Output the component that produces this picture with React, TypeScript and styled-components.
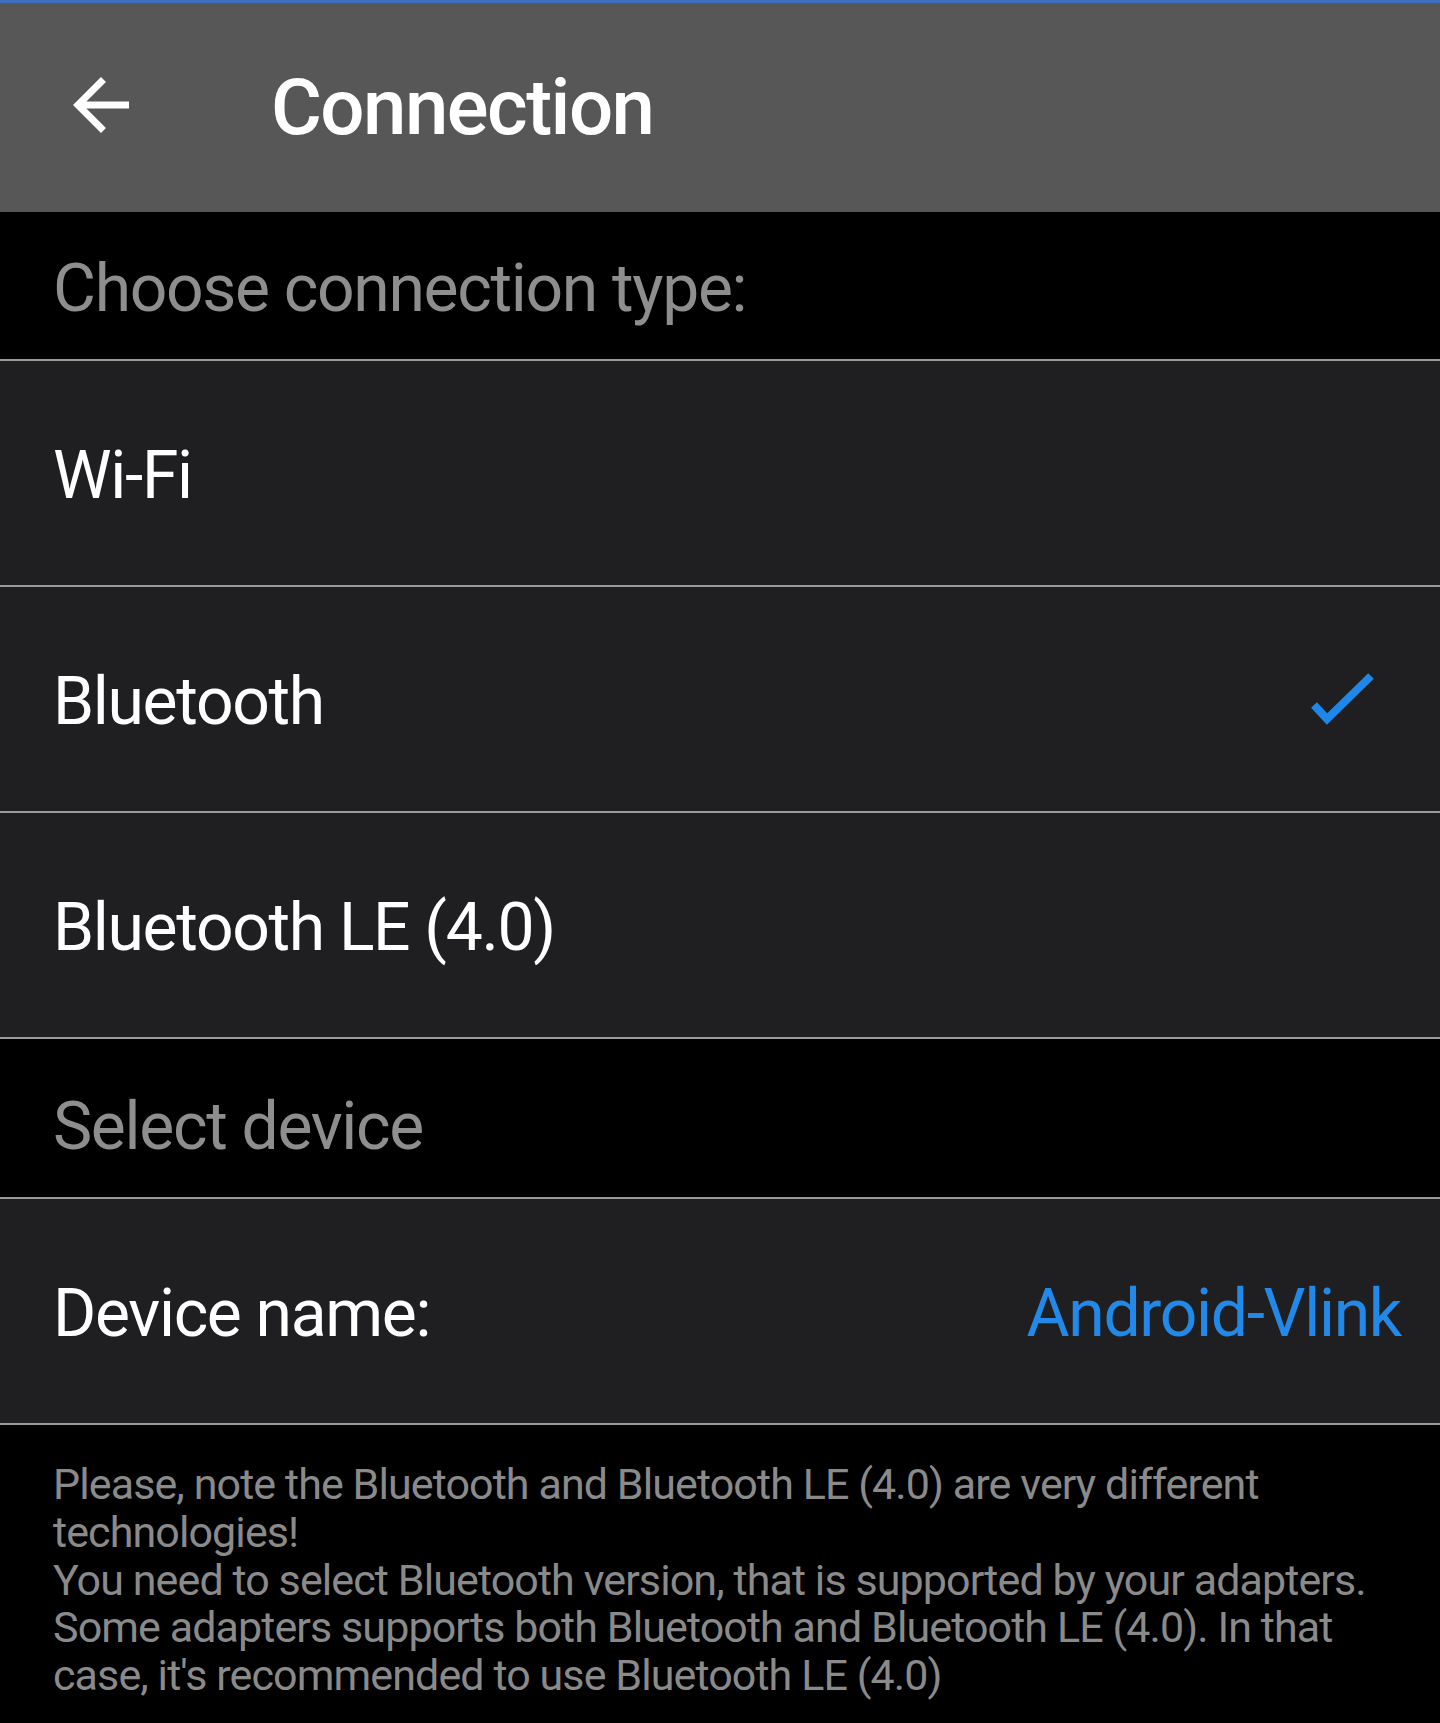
import styled, {createGlobalStyle} from "styled-components";

const GlobalStyle = createGlobalStyle`
  body {
    margin: 0;
    background: #000;
    font-family: Roboto, "Liberation Sans", Arial, sans-serif;
  }
`

const Page = styled.div`
  width: 1440px;
  min-height: 1723px;
  background: #000;
`

const TopBar = styled.header`
  height: 209px;
  border-top: 3px solid #3d6fc2;
  background: #575757;
  display: flex;
  align-items: center;
  padding-left: 59px;
`

const BackButton = styled.button`
  width: 84px;
  height: 84px;
  padding: 0;
  border: none;
  background: transparent;
  display: flex;
  align-items: center;
  justify-content: center;
  margin-top: -5px;
`

const Title = styled.h1`
  margin: 0 0 0 128px;
  color: #fff;
  font-size: 78px;
  font-weight: 500;
  letter-spacing: -0.02em;
`

const Section = styled.div<{ $height: number; $offset: number; $divider?: boolean }>`
  height: ${p => p.$height}px;
  border-top: ${p => (p.$divider ? "2px solid #9a9a9a" : "none")};
  background: #000;
  display: flex;
  align-items: center;
  padding: ${p => p.$offset}px 53px 0;
  box-sizing: border-box;
  color: #8e8e8e;
  font-size: 66px;
  letter-spacing: -0.02em;
`

const Row = styled.div`
  height: 226px;
  box-sizing: border-box;
  border-top: 2px solid #9a9a9a;
  background: #1f1f21;
  display: flex;
  align-items: center;
  justify-content: space-between;
  padding: 5px 39px 0 53px;
  color: #fff;
  font-size: 66px;
  letter-spacing: -0.02em;
`

const Value = styled.span`
  color: #2389e8;
`

const Check = styled.svg`
  width: 70px;
  height: 60px;
  margin-right: 22px;
`

const Note = styled.p`
  margin: 0;
  border-top: 2px solid #9a9a9a;
  padding: 36px 40px 40px 53px;
  color: #8a8a8a;
  font-size: 43px;
  line-height: 47.8px;
  letter-spacing: -0.021em;
  white-space: pre-line;
`

const options = ["Wi-Fi", "Bluetooth", "Bluetooth LE (4.0)"]

export default function App() {
    const selected = "Bluetooth"
    return (
        <>
            <GlobalStyle/>
            <Page>
                <TopBar>
                    <BackButton aria-label="Back">
                        <svg width="84" height="84" viewBox="0 0 24 24" fill="#fff">
                            <path d="M20 11H7.83l5.59-5.59L12 4l-8 8 8 8 1.41-1.41L7.83 13H20v-2z"/>
                        </svg>
                    </BackButton>
                    <Title>Connection</Title>
                </TopBar>

                <Section $height={147} $offset={6}>Choose connection type:</Section>
                {options.map(o => (
                    <Row key={o}>
                        <span>{o}</span>
                        {o === selected && (
                            <Check viewBox="0 0 70 60">
                                <polyline points="5,33 18,47 62,4" fill="none" stroke="#1e88ea" strokeWidth="8"/>
                            </Check>
                        )}
                    </Row>
                ))}

                <Section $height={160} $offset={16} $divider>Select device</Section>
                <Row>
                    <span>Device name:</span>
                    <Value>Android-Vlink</Value>
                </Row>

                <Note>
                    {"Please, note the Bluetooth and Bluetooth LE (4.0) are very different technologies!\nYou need to select Bluetooth version, that is supported by your adapters.\nSome adapters supports both Bluetooth and Bluetooth LE (4.0). In that case, it's recommended to use Bluetooth LE (4.0)"}
                </Note>
            </Page>
        </>
    )
}
